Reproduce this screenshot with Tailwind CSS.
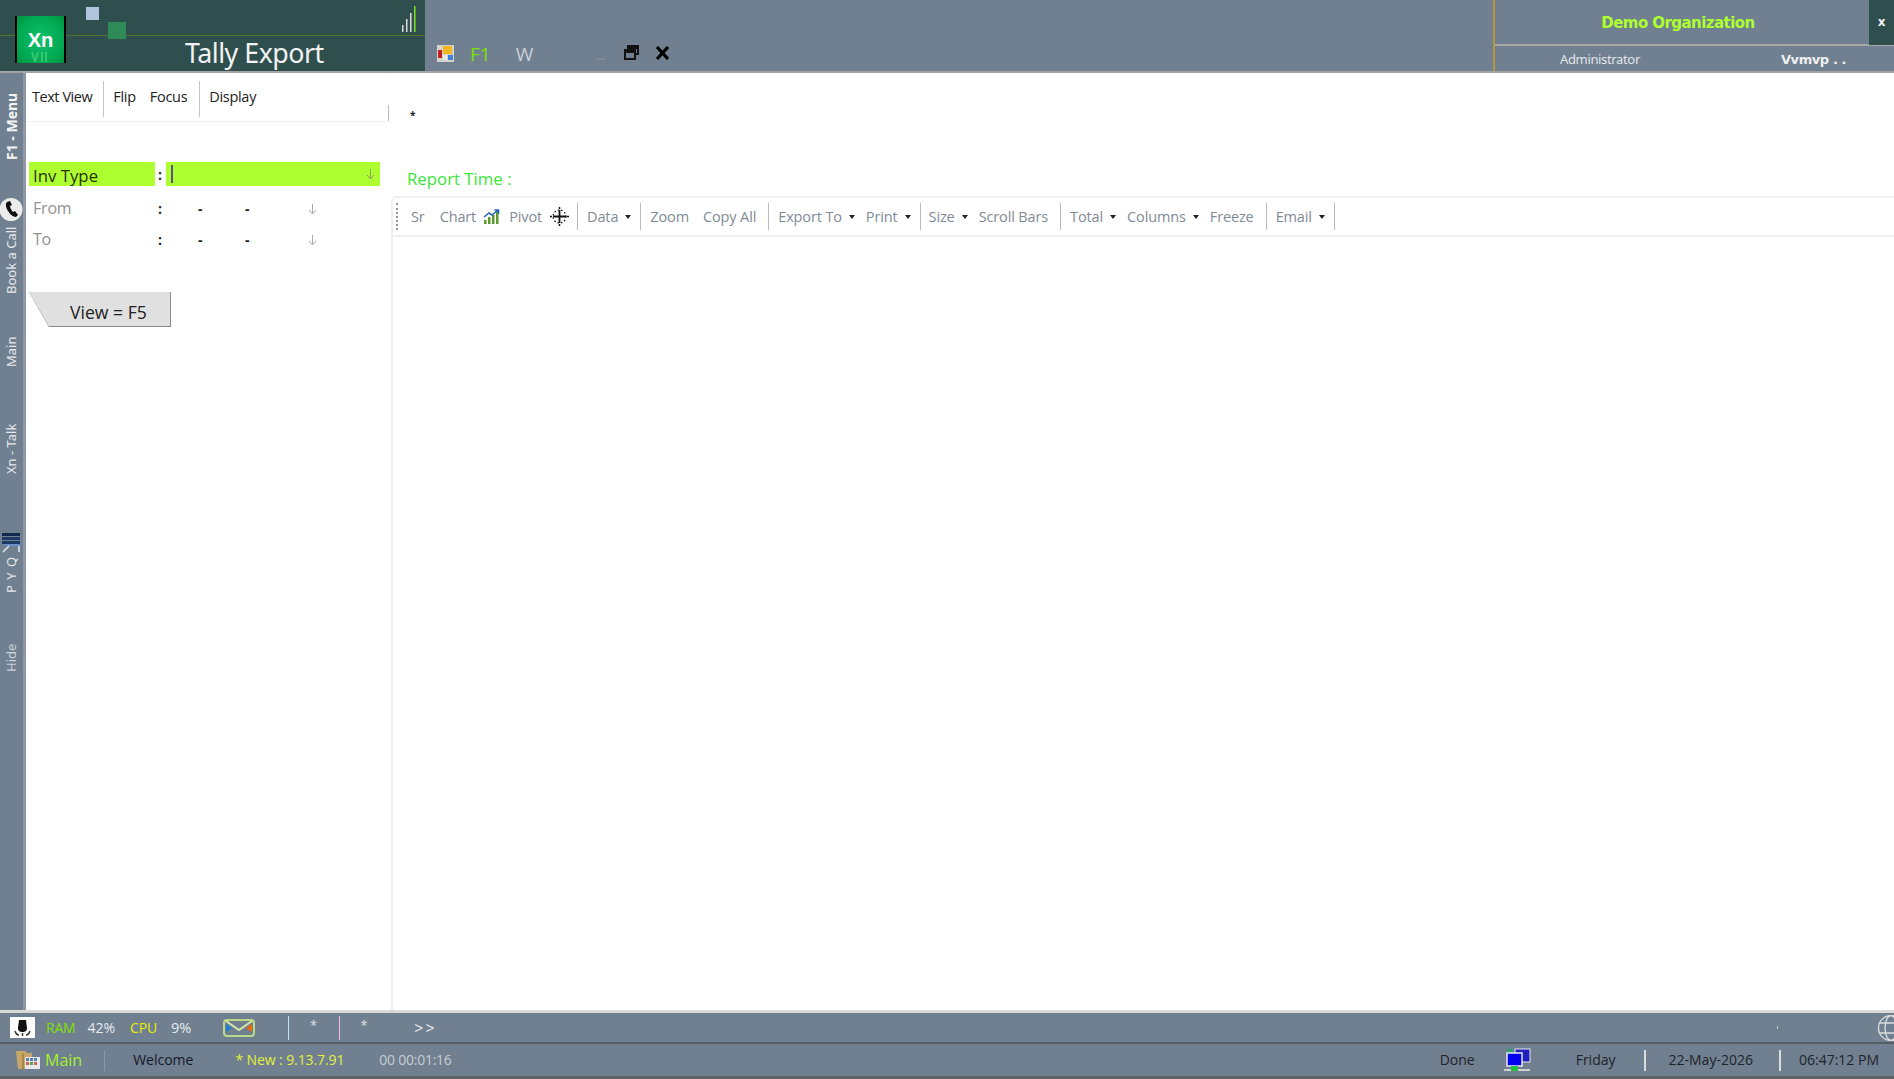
<!DOCTYPE html>
<html lang="en">
<head>
  <meta charset="UTF-8" />
  <title>Tally Export</title>
  <script src="https://cdn.jsdelivr.net/npm/@tailwindcss/browser@4"></script>
</head>
<body class="w-[1894px] h-[1079px] overflow-hidden bg-white font-['Open_Sans',sans-serif] flex flex-col">

  <!-- title bar -->
  <header class="h-[73px] shrink-0 flex bg-[#708090] border-b-2 border-[#a3a3a3]">
    <div class="relative w-[425px] bg-[#2f4f4f] flex">
      <div class="absolute left-0 right-0 top-[35px] h-px bg-[#55712f]"></div>
      <div class="absolute left-[86px] top-[7px] w-[13px] h-[13px] bg-[#b0c4de]"></div>
      <div class="absolute left-[108px] top-[22px] w-[18px] h-[17px] bg-[#2e8b57]"></div>
      <svg class="absolute left-[402px] top-[6px]" width="14" height="26" viewBox="0 0 14 26">
        <rect x="0" y="19" width="1.5" height="7" fill="#d8d8d8"/><rect x="4" y="13" width="1.5" height="13" fill="#d8d8d8"/>
        <rect x="8" y="7" width="1.5" height="19" fill="#d8d8d8"/><rect x="12" y="0" width="1.5" height="26" fill="#7fdf20"/>
      </svg>
      <div class="relative ml-[15px] mt-[16px] w-[51px] h-[47px] border-x-2 border-black bg-[radial-gradient(circle,#10c070,#00a850_70%,#009040)] flex justify-center">
        <span class="text-white font-bold text-[20px] leading-[32px] mt-[8px] font-['Liberation_Sans',sans-serif]">Xn</span>
        <svg class="absolute left-[13px] top-[36px] opacity-30" width="20" height="10" viewBox="0 0 20 10"><path d="M2 0l3 10 3-10M12 0v10M16 0v10" stroke="#b0ffb0" stroke-width="2" fill="none"/></svg>
      </div>
      <div class="ml-[119px] mt-[34px] text-[26.8px] leading-[38px] tracking-[-0.5px] text-[#f2f2f2] whitespace-nowrap font-['Noto_Sans',sans-serif]">Tally Export</div>
    </div>

    <div class="flex-1 flex items-start pt-[45px]">
      <svg class="ml-[12px]" width="17" height="17" viewBox="0 0 17 17">
        <rect width="17" height="17" fill="#d4d4c8"/><rect x="1" y="5" width="4" height="8" fill="#c02020"/><rect x="6" y="1" width="9" height="8" fill="#f0b820"/><rect x="6" y="10" width="4" height="5" fill="#e8e8e8"/><rect x="11" y="10" width="5" height="5" fill="#4080e0"/>
      </svg>
      <span class="ml-[16px] -mt-[4px] text-[19px] leading-[26px] text-[#7ce000]">F1</span>
      <span class="ml-[25px] -mt-[4px] text-[19px] leading-[26px] text-[#c8d0d8]">W</span>
      <div class="ml-[63px] mt-[13px] w-[10px] h-[2px] bg-[#808a96]"></div>
      <svg class="ml-[18px]" width="15" height="15" viewBox="0 0 15 15" fill="none" stroke="#111" stroke-width="2"><rect x="4" y="1" width="10" height="8"/><rect x="1" y="5" width="10" height="9" fill="#708090"/><path d="M1 6.5h10M4 2.5h10" stroke-width="3"/></svg>
      <svg class="ml-[16px] mt-[1px]" width="15" height="14" viewBox="0 0 15 14"><path d="M2 1l11 12M13 1L2 13" stroke="#000" stroke-width="3.2"/></svg>
    </div>

    <div class="w-[401px] border-l-2 border-[#b8963c] flex flex-col">
      <div class="h-[46px] flex border-b-2 border-[#a9a9a9]">
        <div class="flex-1 text-center text-[15px] leading-[46px] font-bold text-[#adff2f] font-['DejaVu_Sans',sans-serif] tracking-[-0.55px] pr-[8px]">Demo Organization</div>
        <div class="w-[25px] -mb-[1px] bg-[#2f4f4f] text-center text-[12px] leading-[44px] font-bold text-[#f0f0f0] font-['DejaVu_Sans',sans-serif]">x</div>
      </div>
      <div class="flex items-center h-[25px] pt-[2px]">
        <span class="ml-[65px] text-[13px] text-[#e0e4ea] font-['Noto_Sans',sans-serif] tracking-[-0.35px]">Administrator</span>
        <span class="ml-[141px] text-[13px] font-bold text-[#eef0f2] font-['DejaVu_Sans',sans-serif] tracking-[-0.4px] whitespace-pre">Vvmvp . .</span>
      </div>
    </div>
  </header>

  <div class="flex-1 flex min-h-0">
    <!-- side strip -->
    <aside class="w-[26px] shrink-0 bg-[#708090] border-r-[3px] border-[#8f98a2] flex flex-col items-center text-[13px] text-[#e4e8ec] font-['Noto_Sans',sans-serif]">
      <div class="mt-[20px] h-[67px] flex items-center justify-center [writing-mode:vertical-rl] rotate-180 font-bold text-[14px] whitespace-nowrap text-[#f4f4f4]">F1 - Menu</div>
      <svg class="mt-[37px] -ml-[1px]" width="24" height="25" viewBox="0 0 24 25">
        <circle cx="12" cy="12.5" r="11.5" fill="#ececec"/><path d="M8 5c-2 2-1 6 1 9s5 6 8 6l2-2-3-4-2 1c-1-1-3-4-3-6l2-1-2-4z" fill="#111"/>
      </svg>
      <div class="mt-[6px] h-[65px] flex items-center justify-center [writing-mode:vertical-rl] rotate-180 whitespace-nowrap">Book a Call</div>
      <div class="mt-[45px] h-[28px] flex items-center justify-center [writing-mode:vertical-rl] rotate-180 whitespace-nowrap">Main</div>
      <div class="mt-[57px] h-[51px] flex items-center justify-center [writing-mode:vertical-rl] rotate-180 whitespace-nowrap">Xn - Talk</div>
      <svg class="mt-[59px] -ml-[1px]" width="20" height="20" viewBox="0 0 20 20">
        <rect x="1" y="0" width="18" height="3" fill="#12284c"/><rect x="1" y="4" width="18" height="3" fill="#1c3a66"/><rect x="1" y="8" width="18" height="3" fill="#1c3a66"/>
        <path d="M1 11h18v2h-5l-8 0z" fill="#6a90c8"/><path d="M2 19l6-6M18 13v6" stroke="#e0e8f0" stroke-width="1.5"/>
      </svg>
      <div class="mt-[1px] h-[41px] flex items-center justify-center [writing-mode:vertical-rl] rotate-180 whitespace-nowrap tracking-[1px]">P Y Q</div>
      <div class="mt-[50px] h-[26px] flex items-center justify-center [writing-mode:vertical-rl] rotate-180 whitespace-nowrap text-[#c8d0d8]">Hide</div>
    </aside>

    <!-- left pane -->
    <section class="w-[365px] shrink-0 flex flex-col">
      <div class="relative w-[363px] h-[48px] flex items-center text-[14.5px] text-[#222] tracking-[-0.3px] shadow-[0_1px_1px_rgba(0,0,0,0.06)]">
        <span class="ml-[6px] tracking-[-0.45px]">Text View</span>
        <div class="ml-[11px] mt-[3px] w-[1px] h-[36px] bg-[#c4c4c4]"></div>
        <span class="ml-[9px]">Flip</span>
        <span class="ml-[14px]">Focus</span>
        <div class="ml-[12px] mt-[3px] w-[1px] h-[36px] bg-[#c4c4c4]"></div>
        <span class="ml-[9px]">Display</span>
        <div class="absolute right-0 bottom-0 w-px h-[16px] bg-[#bbb]"></div>
      </div>

      <div class="mt-[41px] ml-[3px] h-[24px] flex items-center text-[16px] text-[#2a3000]">
        <div class="w-[126px] h-full bg-[#adff2f] pl-[4px] leading-[28px] text-[16.8px]">Inv Type</div>
        <div class="w-[10px] text-center font-bold text-[#222] text-[14px]">:</div>
        <div class="ml-[1px] w-[214px] h-full bg-[#adff2f] flex items-center justify-between pl-[5px] pr-[5px]">
          <div class="w-[2px] h-[18px] bg-[#5d4e8c]"></div>
          <svg width="9" height="11" viewBox="0 0 9 11" fill="none" stroke="#8f9f60"><path d="M4.5 0v9M1 6l3.5 4L8 6" /></svg>
        </div>
      </div>

      <div class="mt-[10px] ml-[3px] h-[24px] flex items-center text-[16px] text-[#939393] tracking-[-0.2px]">
        <div class="w-[126px] pl-[4px]">From</div>
        <div class="w-[10px] text-center font-bold text-[#222] text-[14px]">:</div>
        <span class="ml-[33px] w-[47px] font-bold text-[#222] text-[14px]">-</span>
        <span class="w-[63px] font-bold text-[#222] text-[14px]">-</span>
        <svg class="mt-[2px]" width="9" height="11" viewBox="0 0 9 11" fill="none" stroke="#aaa"><path d="M4.5 0v9M1 6l3.5 4L8 6" /></svg>
      </div>
      <div class="mt-[7px] ml-[3px] h-[24px] flex items-center text-[16px] text-[#939393] tracking-[-0.2px]">
        <div class="w-[126px] pl-[4px]">To</div>
        <div class="w-[10px] text-center font-bold text-[#222] text-[14px]">:</div>
        <span class="ml-[33px] w-[47px] font-bold text-[#222] text-[14px]">-</span>
        <span class="w-[63px] font-bold text-[#222] text-[14px]">-</span>
        <svg class="mt-[2px]" width="9" height="11" viewBox="0 0 9 11" fill="none" stroke="#aaa"><path d="M4.5 0v9M1 6l3.5 4L8 6" /></svg>
      </div>

      <div class="mt-[41px] ml-[3px] w-[142px] h-[35px] bg-[#8a8a8a] [clip-path:polygon(0_0,100%_0,100%_100%,14%_100%)]">
        <div class="w-[141px] h-[34px] bg-[#e0e0e0] [clip-path:polygon(0_0,100%_0,100%_100%,14%_100%)] pl-[41px] text-[17.6px] leading-[40px] text-[#222]">View = F5</div>
      </div>
    </section>

    <!-- report pane -->
    <main class="flex-1 flex flex-col min-w-0">
      <div class="pl-[19px] pt-[36px] h-[124px] shrink-0">
        <div class="text-[10px] leading-[12px] font-bold text-[#222]">*</div>
        <div class="mt-[46px] -ml-[3px] text-[16.8px] leading-[24px] text-[#3ae63a]">Report Time :</div>
      </div>
      <div class="flex-1 border-l-2 border-[#f0f0f0] rounded-tl-[6px]">
        <div class="h-[41px] -mt-[1px] border-y-2 border-[#f0f0f0] flex items-center text-[14.5px] tracking-[-0.13px] text-[#7f8b96] whitespace-nowrap">
          <div class="ml-[3px] h-[27px] w-[2px] border-l-2 border-dotted border-[#999]"></div>
          <span class="ml-[13px]">Sr</span>
          <span class="ml-[15px]">Chart</span>
          <svg class="ml-[7px]" width="17" height="15" viewBox="0 0 17 15">
            <path d="M1 15v-4h2.5v4zM5 15V8h2.5v7zM9 15V6h2.5v9zM13 15V3h2.5v12z" fill="#5a9a2e"/><path d="M1 8l5-4 3 2 6-5M11.500 1H15.500v4" stroke="#2a66b0" stroke-width="1.600" fill="none"/>
          </svg>
          <span class="ml-[9px]">Pivot</span>
          <svg class="ml-[8px]" width="19" height="19" viewBox="0 0 19 19" fill="none" stroke="#111">
            <path d="M9.500 3v13M3 9.500h13" stroke-width="1.800"/><circle cx="9.500" cy="9.500" r="6.500" stroke-dasharray="1.500 2" stroke-width="1.200"/>
            <path d="M9.500 0v2M9.500 17v2M0 9.500h2M17 9.500h2" stroke-width="1.500"/>
          </svg>
          <div class="ml-[8px] w-px h-[27px] bg-[#bbb]"></div>
          <span class="ml-[9px]">Data</span>
          <div class="ml-[7px] mt-[1px] border-x-[3.5px] border-x-transparent border-t-[4px] border-t-[#222]"></div>
          <div class="ml-[9px] w-px h-[27px] bg-[#bbb]"></div>
          <span class="ml-[9px]">Zoom</span>
          <span class="ml-[14px]">Copy All</span>
          <div class="ml-[12px] w-px h-[27px] bg-[#bbb]"></div>
          <span class="ml-[9px]">Export To</span>
          <div class="ml-[7px] mt-[1px] border-x-[3.5px] border-x-transparent border-t-[4px] border-t-[#222]"></div>
          <span class="ml-[11px]">Print</span>
          <div class="ml-[7px] mt-[1px] border-x-[3.5px] border-x-transparent border-t-[4px] border-t-[#222]"></div>
          <div class="ml-[9px] w-px h-[27px] bg-[#bbb]"></div>
          <span class="ml-[8px]">Size</span>
          <div class="ml-[7px] mt-[1px] border-x-[3.5px] border-x-transparent border-t-[4px] border-t-[#222]"></div>
          <span class="ml-[11px]">Scroll Bars</span>
          <div class="ml-[12px] w-px h-[27px] bg-[#bbb]"></div>
          <span class="ml-[9px]">Total</span>
          <div class="ml-[7px] mt-[1px] border-x-[3.5px] border-x-transparent border-t-[4px] border-t-[#222]"></div>
          <span class="ml-[11px]">Columns</span>
          <div class="ml-[7px] mt-[1px] border-x-[3.5px] border-x-transparent border-t-[4px] border-t-[#222]"></div>
          <span class="ml-[11px]">Freeze</span>
          <div class="ml-[12px] w-px h-[27px] bg-[#bbb]"></div>
          <span class="ml-[9px]">Email</span>
          <div class="ml-[7px] mt-[1px] border-x-[3.5px] border-x-transparent border-t-[4px] border-t-[#222]"></div>
          <div class="ml-[9px] w-px h-[27px] bg-[#bbb]"></div>
        </div>
      </div>
    </main>
  </div>

  <!-- status bars -->
  <footer class="h-[69px] shrink-0 bg-[#708090] border-t-[3px] border-[#d8d8d8] border-b-[3px] border-b-[#5f6368] flex flex-col text-[14px] whitespace-nowrap">
    <div class="relative h-[31px] shrink-0 flex items-center border-b-[2px] border-[#565c62]">
      <div class="ml-[10px] w-[25px] h-[21px] bg-white flex items-center justify-center">
        <svg width="17" height="17" viewBox="0 0 17 17"><path d="M5 1h7l1 8c0 3-2 4-4.500 4S4 12 4 9z" fill="#111"/><path d="M1 12c1 3 3 4 4 4M16 12c-1 3-3 4-4 4M8.500 14v3" stroke="#333" stroke-width="1.500" fill="none"/></svg>
      </div>
      <span class="ml-[11px] text-[#7fe000] tracking-[-0.2px]">RAM</span>
      <span class="ml-[12px] text-[#e8ecf0]">42%</span>
      <span class="ml-[15px] text-[#e6ee00] tracking-[-0.2px]">CPU</span>
      <span class="ml-[14px] text-[14.500px] text-[#e8ecf0]">9%</span>
      <svg class="ml-[32px]" width="32" height="18" viewBox="0 0 32 18">
        <rect x="1" y="1" width="30" height="16" rx="3" fill="none" stroke="#bcd88a" stroke-width="2"/><path d="M3 2l13 9 13-9" fill="none" stroke="#d8e8a8" stroke-width="2"/>
        <path d="M3 5l6 4-6 4z" fill="#2080d0"/><path d="M29 5l-6 4 6 4z" fill="#e86a10"/>
      </svg>
      <div class="ml-[33px] w-px h-[24px] bg-[#b8e8f8]"></div>
      <span class="ml-[21px] -mt-[3px] text-[12px] font-bold text-[#c8d0d8]">*</span>
      <div class="ml-[22px] w-px h-[24px] bg-[#f0b8e0]"></div>
      <span class="ml-[21px] -mt-[3px] text-[12px] font-bold text-[#c8d0d8]">*</span>
      <span class="ml-[47px] text-[16px] text-[#e8ecf0] tracking-[2px]">&gt;&gt;</span>
      <div class="absolute left-[1777px] top-[13px] w-px h-[3px] bg-[#ccc]"></div>
      <svg class="absolute right-0 top-[2px]" width="17" height="26" viewBox="0 0 17 26" fill="none" stroke="#ddd" stroke-width="1.300">
        <circle cx="14" cy="13" r="12.500"/><ellipse cx="14" cy="13" rx="6" ry="12.500"/><path d="M2.500 8h23M2.500 18h23"/>
      </svg>
    </div>
    <div class="h-[32px] flex items-center">
      <svg class="ml-[16px]" width="25" height="22" viewBox="0 0 25 22">
        <path d="M0 2h9l2 2h5v16H2z" fill="#c8a668"/><path d="M6 4l2 1v15l-2 1z" fill="#a88848"/><rect x="9" y="8" width="15" height="12" fill="#e8e8e8"/><path d="M10 9h3v3h-3zM14 9h3v3h-3zM18 9h3v3h-3z" fill="#5a80b0"/><path d="M10 13h3v3h-3zM18 13h3v3h-3z" fill="#d06050"/><path d="M14 13h3v3h-3z" fill="#60a060"/>
      </svg>
      <span class="ml-[4px] text-[16px] text-[#a4f22c]">Main</span>
      <div class="ml-[22px] w-px h-[21px] bg-[#8c98a6]"></div>
      <span class="ml-[28px] text-[#14182a] -mt-[2px]">Welcome</span>
      <span class="ml-[42px] text-[#e4f03c] -mt-[2px] tracking-[-0.1px]">* New : 9.13.7.91</span>
      <span class="ml-[35px] text-[#c8ccd0] -mt-[2px] tracking-[-0.25px]">00 00:01:16</span>
      <span class="ml-auto text-[#1f232a] -mt-[2px]">Done</span>
      <svg class="ml-[29px]" width="27" height="24" viewBox="0 0 27 24">
        <circle cx="6" cy="4" r="3.500" fill="#30a070"/><rect x="11" y="1" width="15" height="13" fill="#2020c0" stroke="#e8e8e8"/><rect x="3" y="5" width="15" height="13" fill="#0000f0" stroke="#e8e8e8" stroke-width="1.500"/>
        <path d="M0 22h26" stroke="#d0d0d0" stroke-width="2"/><rect x="7" y="18" width="7" height="5" fill="#20c040"/>
      </svg>
      <span class="ml-[45px] text-[#1f232a] -mt-[2px]">Friday</span>
      <div class="ml-[28px] w-[2px] h-[21px] bg-[#dcdcdc]"></div>
      <span class="ml-[23px] text-[#1f232a] -mt-[2px]">22-May-2026</span>
      <div class="ml-[26px] w-[2px] h-[21px] bg-[#dcdcdc]"></div>
      <span class="ml-[18px] mr-[15px] text-[#1f232a] -mt-[2px]">06:47:12 PM</span>
    </div>
  </footer>
</body>
</html>
